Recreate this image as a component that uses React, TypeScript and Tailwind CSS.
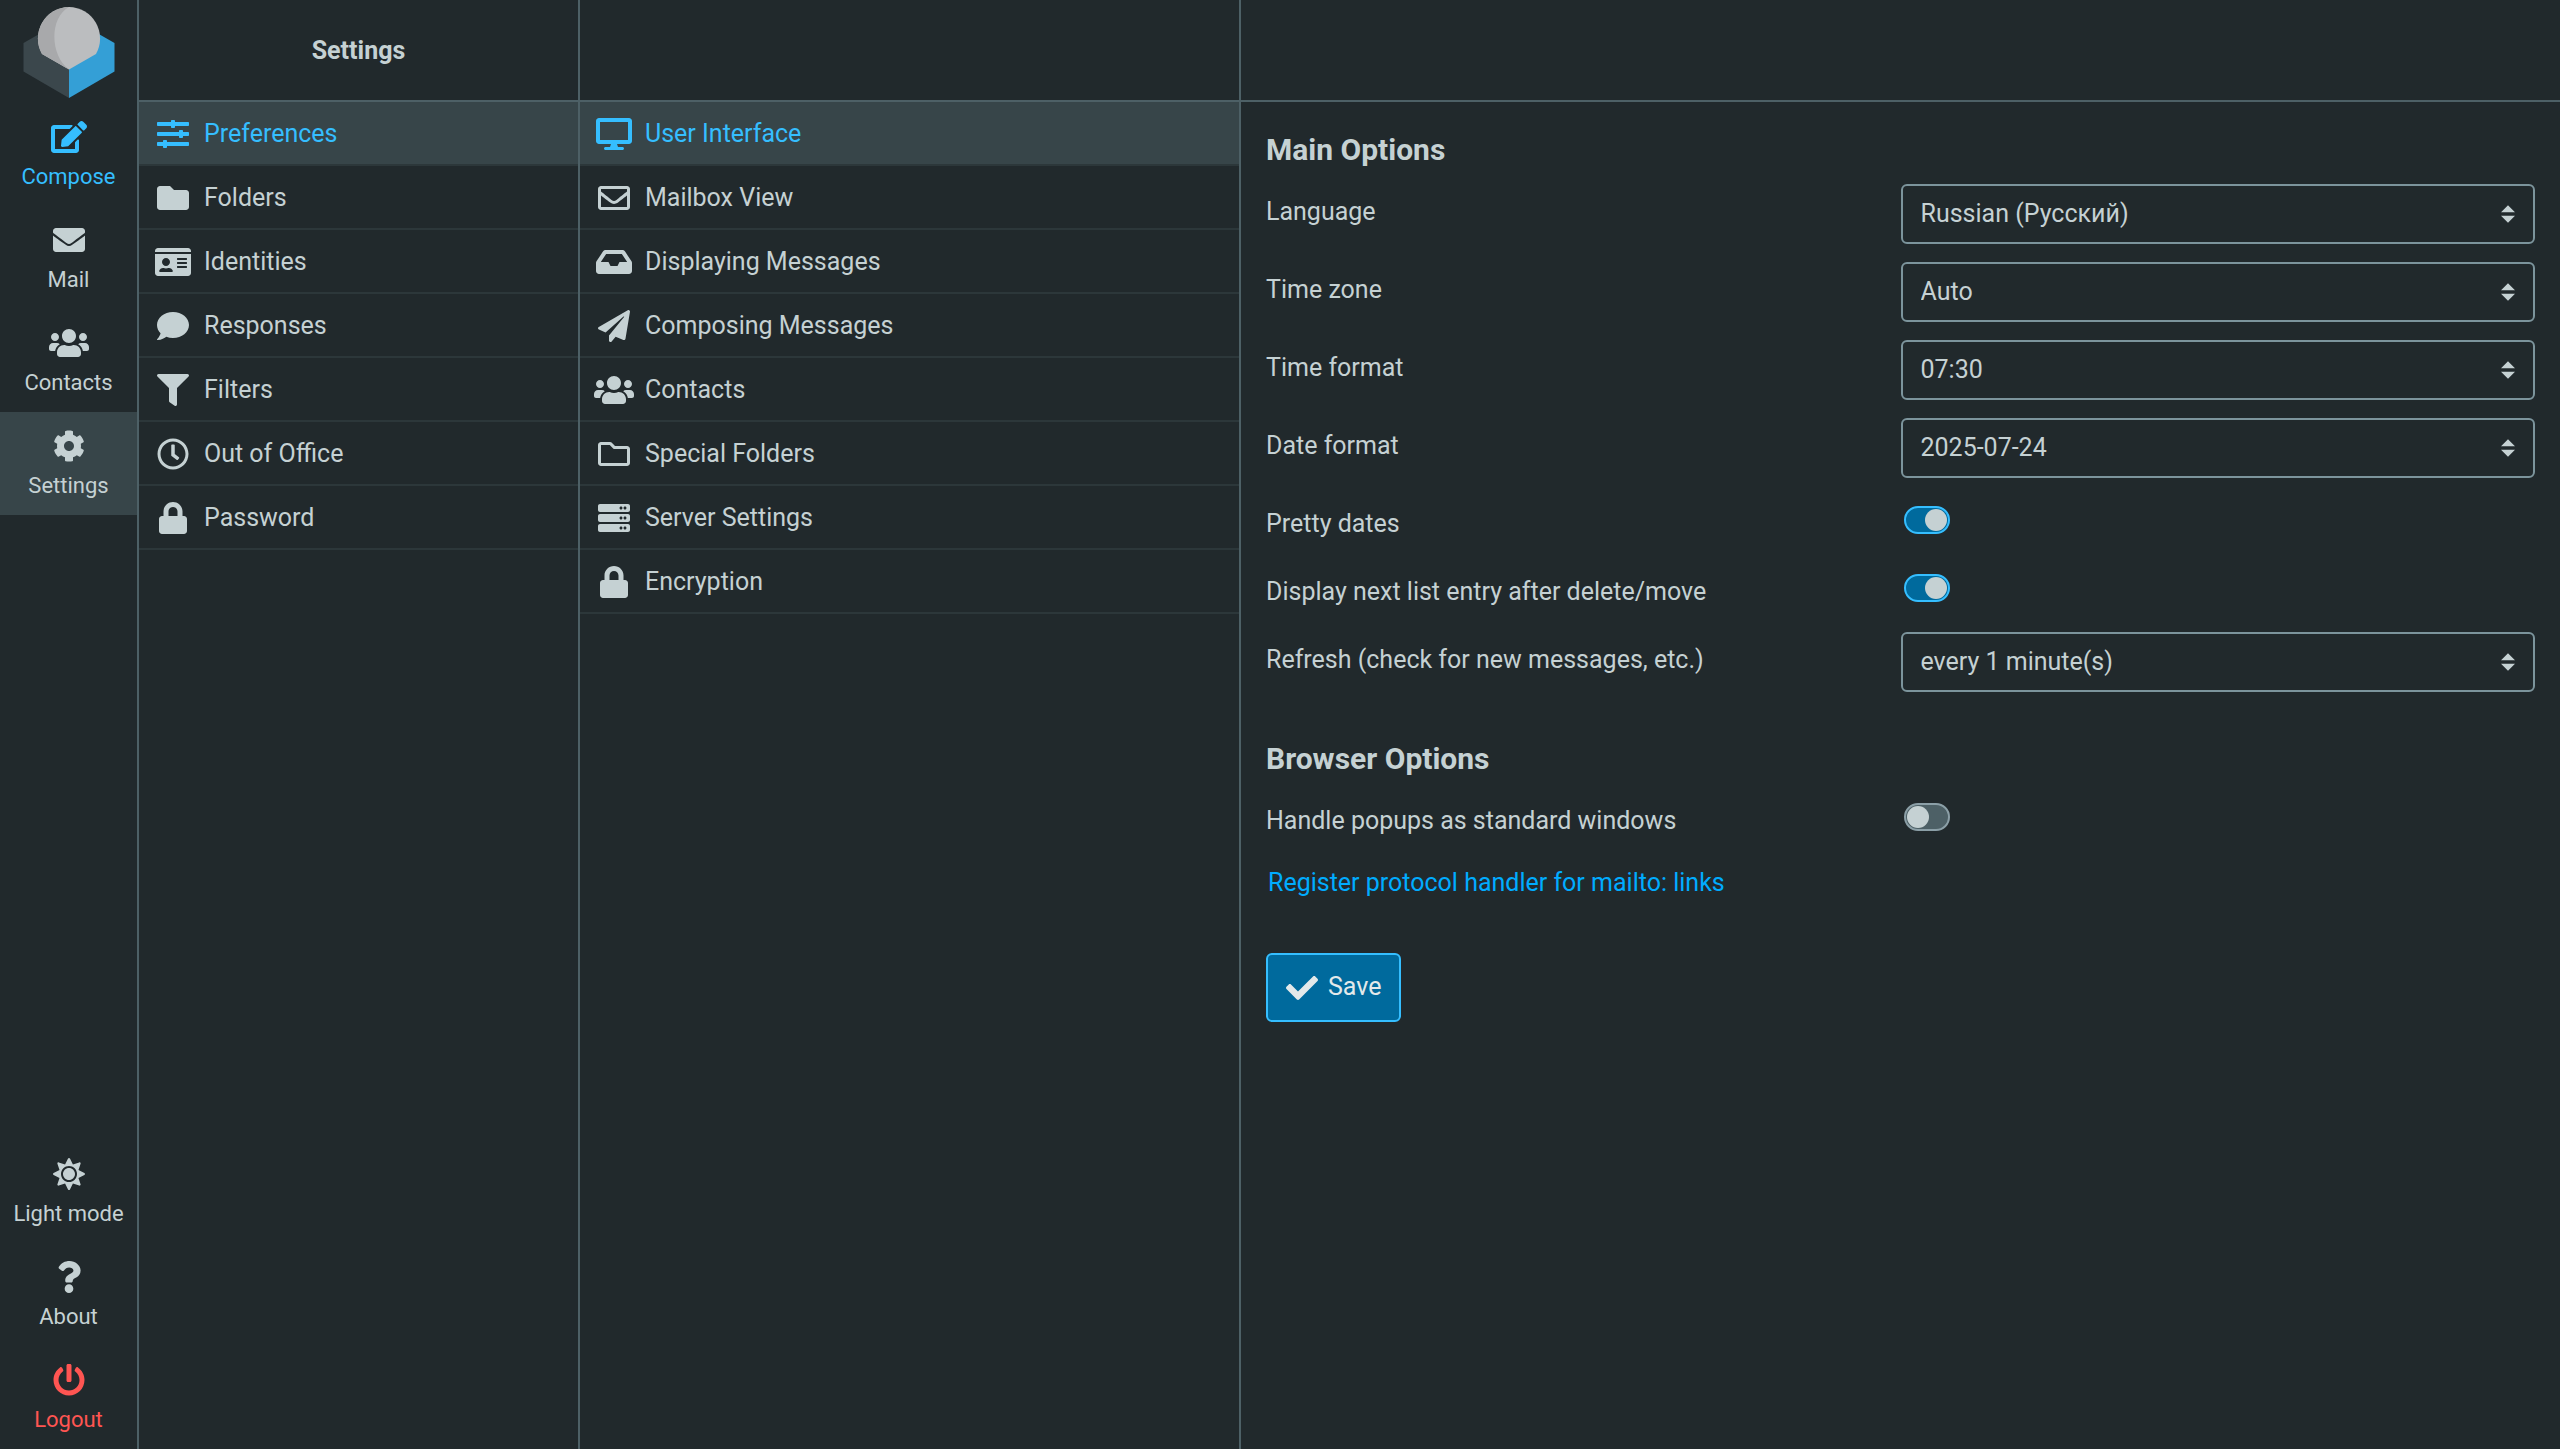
import { useState } from 'react';
import type { IconType } from 'react-icons';
import {
    FaCheck,
    FaCog,
    FaComment,
    FaDesktop,
    FaEdit,
    FaEnvelope,
    FaFilter,
    FaFolder,
    FaIdCard,
    FaInbox,
    FaLock,
    FaPaperPlane,
    FaPowerOff,
    FaQuestion,
    FaRegClock,
    FaRegEnvelope,
    FaRegFolder,
    FaServer,
    FaSlidersH,
    FaSun,
    FaUsers,
} from 'react-icons/fa';

type Item = { label: string; icon: IconType; color?: string };

const taskItems: Item[] = [
    { label: 'Compose', icon: FaEdit, color: 'text-[#35beff]' },
    { label: 'Mail', icon: FaEnvelope },
    { label: 'Contacts', icon: FaUsers },
    { label: 'Settings', icon: FaCog },
];

const footerItems: Item[] = [
    { label: 'Light mode', icon: FaSun },
    { label: 'About', icon: FaQuestion },
    { label: 'Logout', icon: FaPowerOff, color: 'text-[#ff5552]' },
];

const settingsItems: Item[] = [
    { label: 'Preferences', icon: FaSlidersH },
    { label: 'Folders', icon: FaFolder },
    { label: 'Identities', icon: FaIdCard },
    { label: 'Responses', icon: FaComment },
    { label: 'Filters', icon: FaFilter },
    { label: 'Out of Office', icon: FaRegClock },
    { label: 'Password', icon: FaLock },
];

const sectionItems: Item[] = [
    { label: 'User Interface', icon: FaDesktop },
    { label: 'Mailbox View', icon: FaRegEnvelope },
    { label: 'Displaying Messages', icon: FaInbox },
    { label: 'Composing Messages', icon: FaPaperPlane },
    { label: 'Contacts', icon: FaUsers },
    { label: 'Special Folders', icon: FaRegFolder },
    { label: 'Server Settings', icon: FaServer },
    { label: 'Encryption', icon: FaLock },
];

function Logo() {
    return (
        <svg viewBox="0 0 92 92" className="w-[92px] h-[92px]" aria-hidden="true">
            <path d="M0.5 37 46 11v81L0.5 65.500z" fill="#3b474c" />
            <path d="M91.500 37 46 11v81l45.500-26.500z" fill="#349fd6" />
            <path d="M46 1a31.500 31.500 0 0 0-27 47L46 63.500 73 48A31.500 31.500 0 0 0 46 1z" fill="#bbbdbf" />
            <path d="M46 1a31.500 31.500 0 0 0-27 47L46 63.500C27 50 26 12 46 1z" fill="#a8a9ab" />
        </svg>
    );
}

function TaskLink({ item, active }: { item: Item; active?: boolean }) {
    const Icon = item.icon;
    return (
        <a
            href="#"
            className={`flex flex-col items-center h-[103px] pt-[18px] gap-[10px] ${item.color ?? 'text-[#c5d1d3]'} ${active ? 'bg-[#374549]' : ''}`}
        >
            <Icon className="w-10 h-8" />
            <span className="text-[22px] leading-7 whitespace-nowrap">{item.label}</span>
        </a>
    );
}

function List({ items, label }: { items: Item[]; label: string }) {
    const [current, setCurrent] = useState(0);
    return (
        <nav aria-label={label}>
            {items.map((item, i) => {
                const Icon = item.icon;
                return (
                    <a
                        key={item.label}
                        href="#"
                        onClick={() => setCurrent(i)}
                        className={`flex items-center h-16 pt-[2px] pl-[14px] gap-[11px] border-b-2 border-[#2c373a] ${i === current ? 'bg-[#374549] text-[#35beff]' : 'text-[#c5d1d3]'}`}
                    >
                        <Icon className="w-10 h-8" />
                        <span>{item.label}</span>
                    </a>
                );
            })}
        </nav>
    );
}

function SelectRow({ id, label, value }: { id: string; label: string; value: string }) {
    return (
        <div className="grid grid-cols-2 mb-[18px]">
            <label htmlFor={id} className="pt-[10px] leading-9">{label}</label>
            <div className="relative">
                <select
                    id={id}
                    className="w-full h-[60px] appearance-none rounded-md border-2 border-[#7c949c] bg-transparent pl-[18px] pr-12 outline-none"
                >
                    <option>{value}</option>
                </select>
                <svg viewBox="0 0 4 5" className="absolute right-5 top-[21px] w-[14px] h-[18px] fill-[#c5d1d3] pointer-events-none">
                    <path d="M2 0 0 2h4zM2 5 0 3h4z" />
                </svg>
            </div>
        </div>
    );
}

function SwitchRow({ id, label, checked }: { id: string; label: string; checked?: boolean }) {
    return (
        <div className="grid grid-cols-2 h-[68px]">
            <label htmlFor={id} className="pt-[10px] leading-9">{label}</label>
            <div className="pt-[10px] pl-[3px]">
                <input
                    id={id}
                    type="checkbox"
                    defaultChecked={checked}
                    className="block w-[46px] h-[28px] appearance-none rounded-full border-2 border-[#8b9fa7] bg-[#4d6066] checked:border-[#35beff] checked:bg-[#006a9d] before:block before:w-[22px] before:h-[22px] before:m-px before:rounded-full before:bg-[#c5d1d3] checked:before:ml-[19px]"
                />
            </div>
        </div>
    );
}

export default function App() {
    return (
        <div className="flex h-screen bg-[#21292c] text-[#c5d1d3] text-[25px] font-[Roboto,sans-serif] overflow-hidden">
            <aside className="flex flex-col w-[139px] shrink-0 border-r-2 border-[#4d6066]">
                <div className="flex justify-center h-[103px] pt-[6px]">
                    <Logo />
                </div>
                {taskItems.map((item) => (
                    <TaskLink key={item.label} item={item} active={item.label === 'Settings'} />
                ))}
                <div className="mt-auto">
                    {footerItems.map((item) => (
                        <TaskLink key={item.label} item={item} />
                    ))}
                </div>
            </aside>

            <section className="w-[441px] shrink-0 border-r-2 border-[#4d6066]">
                <header className="flex items-center justify-center h-[102px] pt-[2px] border-b-2 border-[#4d6066]">
                    <h1 className="font-bold">Settings</h1>
                </header>
                <List items={settingsItems} label="Settings" />
            </section>

            <section className="w-[661px] shrink-0 border-r-2 border-[#4d6066]">
                <header className="h-[102px] border-b-2 border-[#4d6066]" />
                <List items={sectionItems} label="Sections" />
            </section>

            <main className="flex-1 min-w-0">
                <header className="h-[102px] border-b-2 border-[#4d6066]" />
                <form className="px-[25px] pt-[30px]" onSubmit={(e) => e.preventDefault()}>
                    <h2 className="text-[30px] leading-9 font-bold mb-4">Main Options</h2>
                    <SelectRow id="language" label="Language" value="Russian (Русский)" />
                    <SelectRow id="timezone" label="Time zone" value="Auto" />
                    <SelectRow id="time-format" label="Time format" value="07:30" />
                    <SelectRow id="date-format" label="Date format" value="2025-07-24" />
                    <SwitchRow id="pretty-dates" label="Pretty dates" checked />
                    <SwitchRow id="display-next" label="Display next list entry after delete/move" checked />
                    <SelectRow id="refresh" label="Refresh (check for new messages, etc.)" value="every 1 minute(s)" />

                    <h2 className="text-[30px] leading-9 font-bold mt-[49px] mb-4">Browser Options</h2>
                    <SwitchRow id="popups" label="Handle popups as standard windows" />
                    <a href="#" className="block w-fit mt-1 pl-[2px] leading-9 text-[#00acff]">
                        Register protocol handler for mailto: links
                    </a>

                    <button
                        type="submit"
                        className="flex items-center h-[69px] mt-[52px] px-[18px] gap-[10px] rounded-md border-2 border-[#35beff] bg-[#006a9d] text-[#e3e9ea]"
                    >
                        <FaCheck className="w-8 h-8" />
                        <span className="pb-[2px]">Save</span>
                    </button>
                </form>
            </main>
        </div>
    );
}
